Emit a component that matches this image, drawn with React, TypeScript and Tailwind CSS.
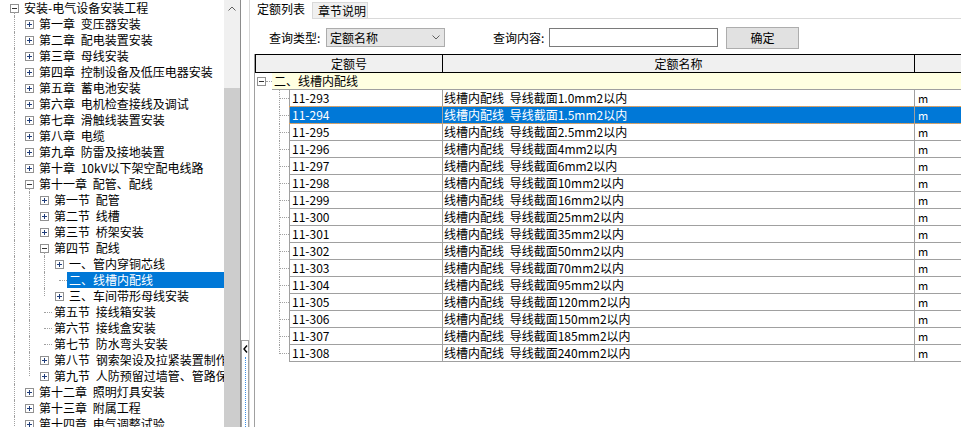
import React from "react";

type Guide = "full" | "half" | "none";
type TreeRow = {
  label: string;
  guides: Guide[];
  kind: "plus" | "minus" | "leaf";
  selected?: boolean;
};

const treeRows: TreeRow[] = [
  { label: "安装-电气设备安装工程", guides: [], kind: "minus" },
  { label: "第一章 变压器安装", guides: ["full"], kind: "plus" },
  { label: "第二章 配电装置安装", guides: ["full"], kind: "plus" },
  { label: "第三章 母线安装", guides: ["full"], kind: "plus" },
  { label: "第四章 控制设备及低压电器安装", guides: ["full"], kind: "plus" },
  { label: "第五章 蓄电池安装", guides: ["full"], kind: "plus" },
  { label: "第六章 电机检查接线及调试", guides: ["full"], kind: "plus" },
  { label: "第七章 滑触线装置安装", guides: ["full"], kind: "plus" },
  { label: "第八章 电缆", guides: ["full"], kind: "plus" },
  { label: "第九章 防雷及接地装置", guides: ["full"], kind: "plus" },
  { label: "第十章 10kV以下架空配电线路", guides: ["full"], kind: "plus" },
  { label: "第十一章 配管、配线", guides: ["full"], kind: "minus" },
  { label: "第一节 配管", guides: ["full", "full"], kind: "plus" },
  { label: "第二节 线槽", guides: ["full", "full"], kind: "plus" },
  { label: "第三节 桥架安装", guides: ["full", "full"], kind: "plus" },
  { label: "第四节 配线", guides: ["full", "full"], kind: "minus" },
  { label: "一、管内穿铜芯线", guides: ["full", "full", "full"], kind: "plus" },
  { label: "二、线槽内配线", guides: ["full", "full", "full"], kind: "leaf", selected: true },
  { label: "三、车间带形母线安装", guides: ["full", "full", "half"], kind: "plus" },
  { label: "第五节 接线箱安装", guides: ["full", "full"], kind: "leaf" },
  { label: "第六节 接线盒安装", guides: ["full", "full"], kind: "leaf" },
  { label: "第七节 防水弯头安装", guides: ["full", "full"], kind: "leaf" },
  { label: "第八节 钢索架设及拉紧装置制作安装", guides: ["full", "full"], kind: "plus" },
  { label: "第九节 人防预留过墙管、管路保护", guides: ["full", "half"], kind: "plus" },
  { label: "第十二章 照明灯具安装", guides: ["full"], kind: "plus" },
  { label: "第十三章 附属工程", guides: ["full"], kind: "plus" },
  { label: "第十四章 电气调整试验", guides: ["full"], kind: "plus" },
];

const gridRows = [
  ["11-293", "1.0"],
  ["11-294", "1.5"],
  ["11-295", "2.5"],
  ["11-296", "4"],
  ["11-297", "6"],
  ["11-298", "10"],
  ["11-299", "16"],
  ["11-300", "25"],
  ["11-301", "35"],
  ["11-302", "50"],
  ["11-303", "70"],
  ["11-304", "95"],
  ["11-305", "120"],
  ["11-306", "150"],
  ["11-307", "185"],
  ["11-308", "240"],
];

const ExpandBox = ({ open }: { open: boolean }) => (
  <svg width="9" height="9" viewBox="0 0 9 9" className="block shrink-0">
    <rect x="0.5" y="0.5" width="8" height="8" fill="#fff" stroke="#919191" />
    <line x1="2" y1="4.5" x2="7" y2="4.5" stroke={open ? "#333" : "#1f3d7a"} />
    {!open && <line x1="4.5" y1="2" x2="4.5" y2="7" stroke="#1f3d7a" />}
  </svg>
);

const GuideCell = ({ g }: { g: Guide }) => (
  <div className="w-[15px] h-full flex justify-center shrink-0">
    {g === "full" && <div className="h-full border-l border-dotted border-[#a0a0a0]" />}
    {g === "half" && <div className="h-1/2 border-l border-dotted border-[#a0a0a0]" />}
  </div>
);

const Tree = () => (
  <div className="w-[224px] h-full overflow-hidden">
    {treeRows.map((r, i) => (
      <div key={i} className="flex h-[16px] pl-[7px]">
        {r.guides.map((g, j) => (
          <GuideCell key={j} g={g} />
        ))}
        <div className="w-[15px] h-full relative flex items-center justify-center shrink-0">
          {r.kind === "leaf" ? (
            <div className="ml-[7px] w-[8px] border-t border-dotted border-[#a0a0a0]" />
          ) : (
            <ExpandBox open={r.kind === "minus"} />
          )}
          {r.kind === "minus" && (
            <div className="absolute left-[7px] top-[12px] bottom-0 border-l border-dotted border-[#a0a0a0]" />
          )}
        </div>
        <div
          className={
            r.selected
              ? "flex-1 px-[2px] leading-[16px] whitespace-nowrap bg-[#0078d7] text-white"
              : "flex-1 px-[2px] leading-[16px] whitespace-nowrap"
          }
        >
          {r.label}
        </div>
      </div>
    ))}
  </div>
);

const Scrollbar = () => (
  <div className="w-[16px] h-full bg-[#f0f0f0] flex flex-col shrink-0">
    <div className="h-[17px] flex items-center justify-center">
      <svg width="8" height="5" viewBox="0 0 8 5">
        <polyline points="0.5,4.5 4,1 7.5,4.5" fill="none" stroke="#606060" strokeWidth="1" />
      </svg>
    </div>
    <div className="h-[71px]" />
    <div className="flex-1 bg-[#cdcdcd]" />
  </div>
);

const Splitter = () => (
  <div className="w-[9px] h-full border-l border-[#8c8c8c] flex flex-col shrink-0">
    <div className="h-[340px]" />
    <div className="flex-1 border border-b-0 border-[#a0a0a0] flex flex-col items-center">
      <svg width="5" height="8" viewBox="0 0 5 8" className="mt-[4px]">
        <polyline points="4,0.5 1,4 4,7.5" fill="none" stroke="#000" strokeWidth="1.4" />
      </svg>
      <div className="flex-1 mt-[4px] border-l border-dotted border-[#3a8ee6]" />
    </div>
  </div>
);

const Grid = () => (
  <div className="flex-1 ml-[4px] border-l border-[#a0a0a0] flex flex-col overflow-hidden">
    <div className="flex h-[19px] shrink-0 border-t border-b border-black bg-[#f0f0f0] leading-[17px]">
      <div className="w-[187px] border-l border-black text-center shrink-0">定额号</div>
      <div className="w-[472px] border-l border-black text-center shrink-0">定额名称</div>
      <div className="flex-1 border-l border-black" />
    </div>
    <div className="flex h-[17px] shrink-0">
      <div className="w-[17px] flex items-center shrink-0">
        <div className="ml-[2px]">
          <ExpandBox open />
        </div>
        <div className="flex-1 border-t border-dotted border-[#a0a0a0]" />
      </div>
      <div className="flex-1 bg-[#ffffe1] border-b border-[#a0a0a0] pl-[2px] leading-[16px] whitespace-nowrap">
        二、线槽内配线
      </div>
    </div>
    {gridRows.map(([code, size], i) => {
      const sel = code === "11-294";
      const last = i === gridRows.length - 1;
      return (
        <div key={code} className="flex h-[17px] shrink-0">
          <div className="w-[34px] flex shrink-0">
            <div className="ml-[24px] w-[10px] h-full relative">
              <div
                className={
                  last
                    ? "absolute left-0 top-0 h-1/2 border-l border-dotted border-[#a0a0a0]"
                    : "absolute left-0 top-0 h-full border-l border-dotted border-[#a0a0a0]"
                }
              />
              <div className="absolute left-0 right-0 top-[8px] border-t border-dotted border-[#a0a0a0]" />
            </div>
          </div>
          <div
            className={
              sel
                ? "flex-1 flex relative border-b border-[#a0a0a0] bg-[#0078d7] text-white leading-[16px] whitespace-nowrap"
                : "flex-1 flex relative border-b border-[#a0a0a0] leading-[16px] whitespace-nowrap"
            }
          >
            <div className="w-[153px] border-l border-[#a0a0a0] pl-[2px] shrink-0">{code}</div>
            <div className="w-[472px] border-l border-[#a0a0a0] pl-[1px] shrink-0">
              线槽内配线 导线截面{size}mm2以内
            </div>
            <div className="flex-1 border-l border-[#a0a0a0] pl-[3px] text-[11px]">m</div>
            {sel && (
              <div className="absolute inset-x-0 -top-px bottom-[-1px] border-y border-dotted border-[#f0a048]" />
            )}
          </div>
        </div>
      );
    })}
  </div>
);

const App = () => {
  return (
    <div className="w-[961px] h-[427px] flex overflow-hidden bg-white text-black text-[12px] [word-spacing:3px] font-['Noto_Sans_CJK_SC',sans-serif]">
      <Tree />
      <Scrollbar />
      <Splitter />
      <div className="flex-1 min-w-0 h-full border-l border-[#d9d9d9] flex flex-col">
        <div className="flex items-end h-[19px] shrink-0">
          <div className="w-[62px] h-full pl-[7px] leading-[18px]">定额列表</div>
          <div className="w-[56px] h-[17px] bg-[#f0f0f0] border border-[#d9d9d9] pl-[5px] leading-[15px]">
            章节说明
          </div>
          <div className="flex-1 h-full border-b border-[#d9d9d9]" />
        </div>
        <div className="flex items-center h-[35px] pt-[2px] shrink-0">
          <div className="ml-[19px] w-[57px] whitespace-nowrap">查询类型:</div>
          <div className="w-[119px] h-[19px] bg-[#e5e5e5] border border-[#acacac] flex items-center justify-between pl-[3px] pr-[4px]">
            <span className="leading-[17px]">定额名称</span>
            <svg width="8" height="5" viewBox="0 0 8 5">
              <polyline points="0.5,0.5 4,4 7.5,0.5" fill="none" stroke="#606060" strokeWidth="1" />
            </svg>
          </div>
          <div className="ml-[48px] w-[56px] whitespace-nowrap">查询内容:</div>
          <div className="w-[169px] h-[19px] border border-[#7a7a7a] bg-white" />
          <div className="ml-[8px] w-[73px] h-[22px] bg-[#e1e1e1] border border-[#adadad] flex items-center justify-center">
            确定
          </div>
        </div>
        <Grid />
      </div>
    </div>
  );
};

export default App;
